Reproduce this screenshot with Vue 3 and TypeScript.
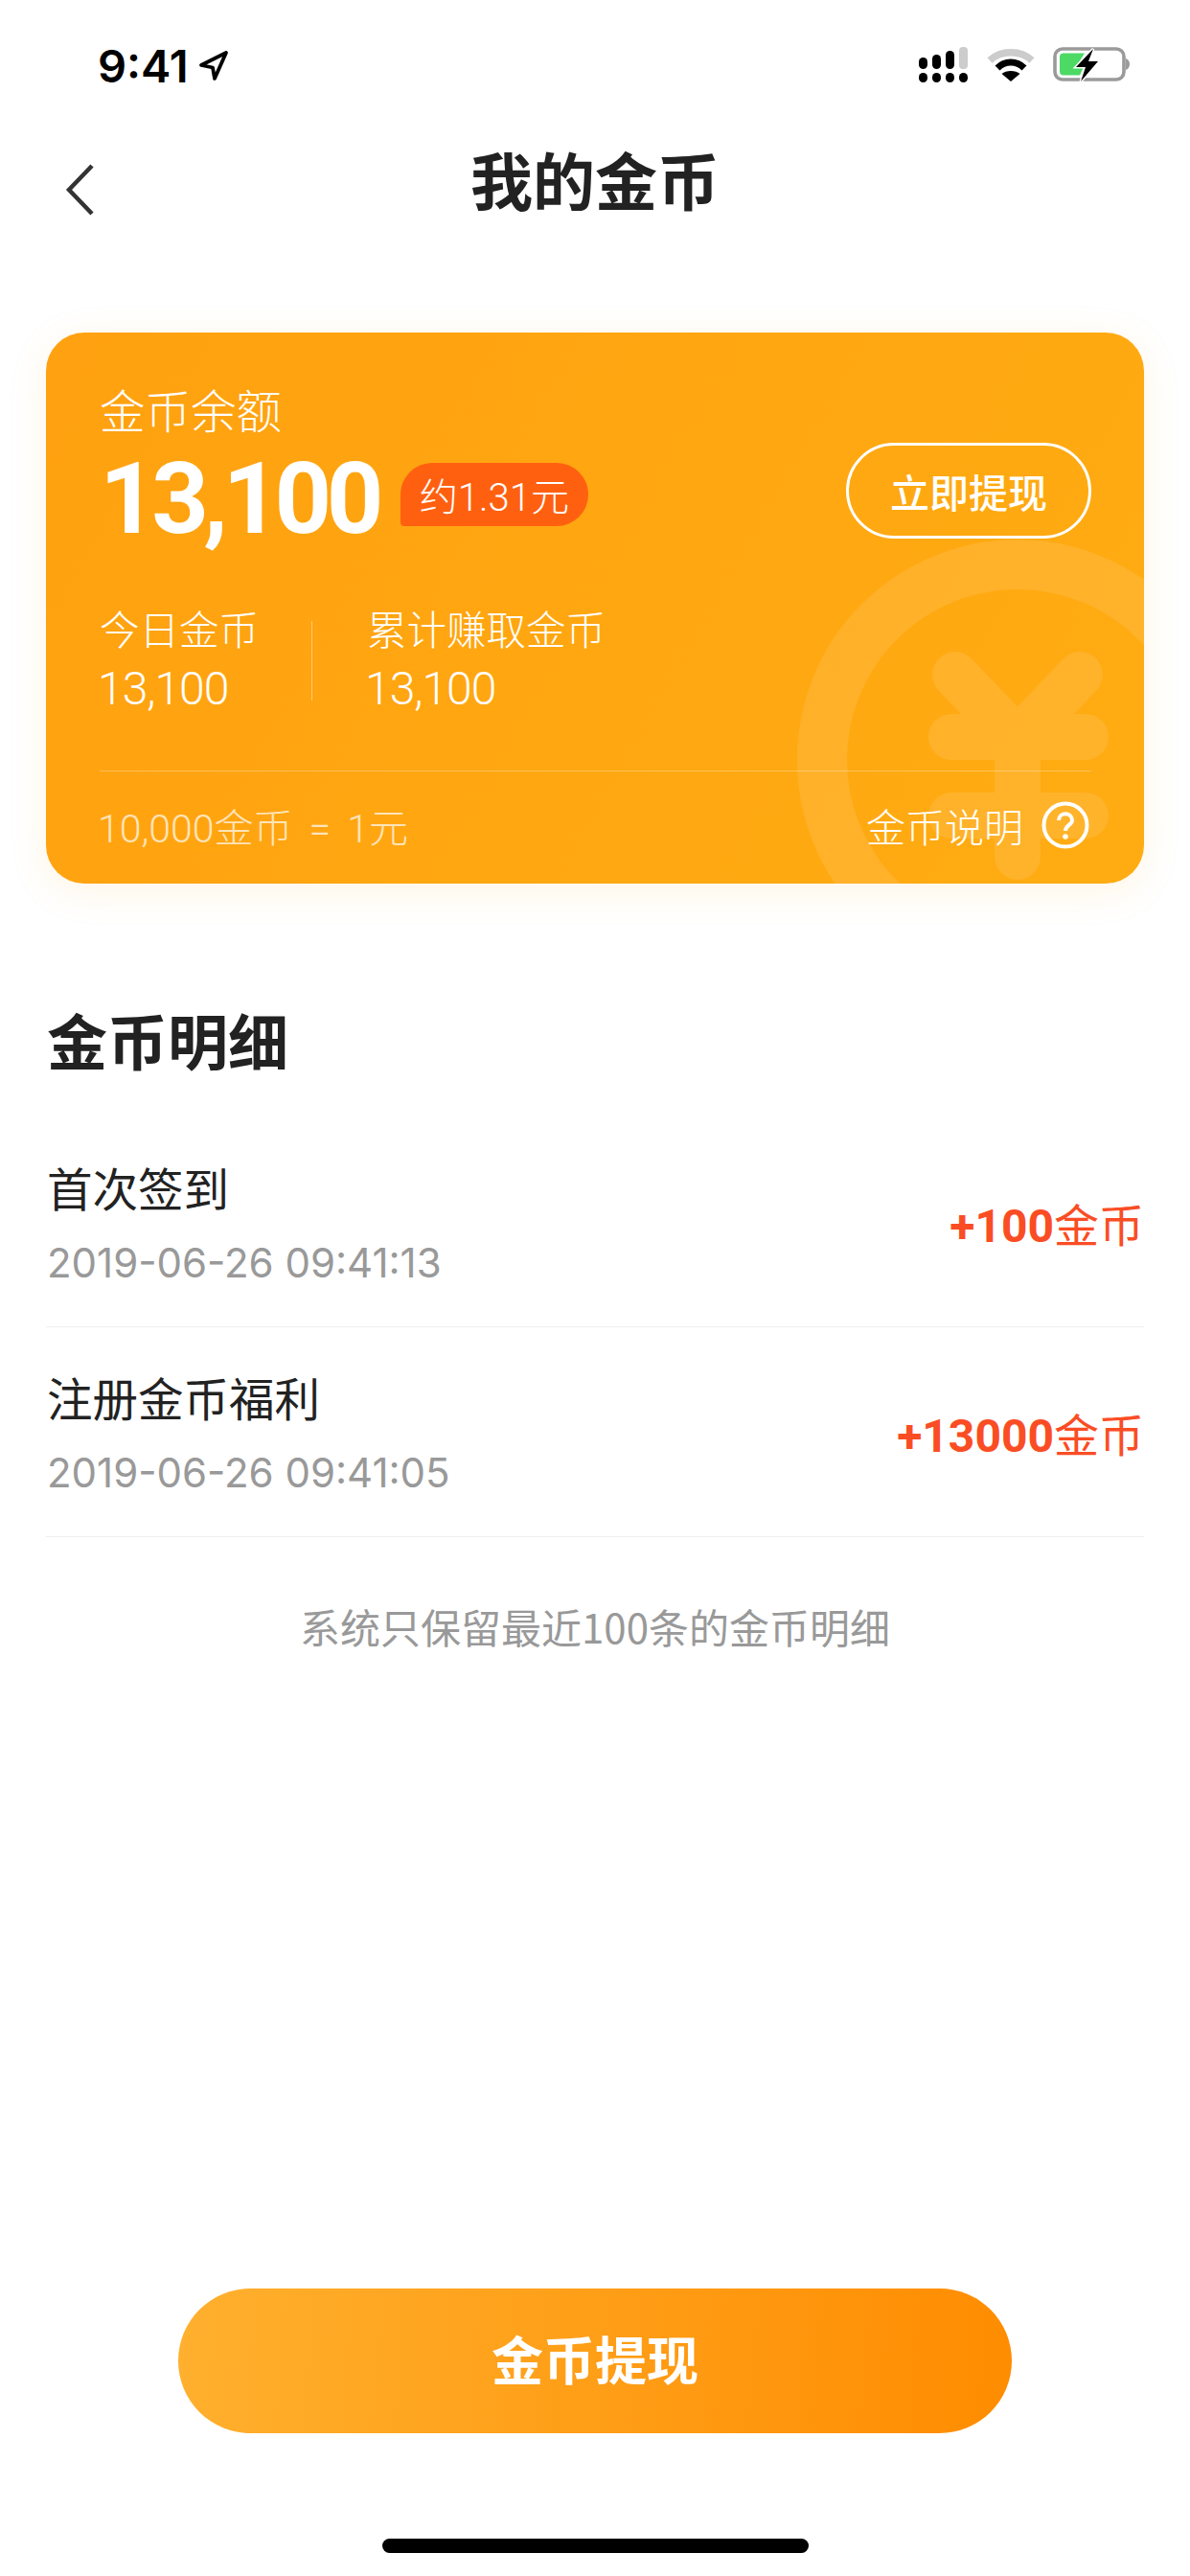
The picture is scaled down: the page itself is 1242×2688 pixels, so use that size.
<template>
  <div class="page">
    <div class="status-bar">
      <div class="time">
        <span>9:41</span>
        <svg class="loc" width="32" height="33" viewBox="0 0 32 33">
          <path d="M29 3 L3 16 L15 18.500 L17 30 Z" fill="none" stroke="#000" stroke-width="3.800" stroke-linejoin="round" />
        </svg>
      </div>
      <div class="status-icons">
        <svg width="52" height="38" viewBox="0 0 52 38">
          <g fill="#000">
            <rect x="0" y="11" width="9" height="12" rx="4.500" />
            <rect x="14" y="8" width="9" height="15" rx="4.500" />
            <rect x="28" y="4" width="9" height="19" rx="4.500" />
            <rect x="0" y="27" width="9" height="10" rx="4.500" />
            <rect x="14" y="27" width="9" height="10" rx="4.500" />
            <rect x="28" y="27" width="9" height="10" rx="4.500" />
            <rect x="42" y="27" width="9" height="10" rx="4.500" />
          </g>
          <rect x="42" y="0" width="9" height="23" rx="4" fill="#ccc" />
        </svg>
        <svg width="50" height="37" viewBox="0 0 50 37">
          <path d="M3 14 C15 3 35 3 47 14" fill="none" stroke="#ccc" stroke-width="7.500" />
          <path d="M11 22 C19 14 31 14 39 22" fill="none" stroke="#000" stroke-width="7" />
          <path d="M25 36 L15.500 28 C20 24 30 24 34.500 28 Z" fill="#000" />
        </svg>
        <svg width="81" height="37" viewBox="0 0 81 37">
          <rect x="2" y="2" width="72" height="32" rx="8" fill="none" stroke="#9a9a9a" stroke-width="3.600" />
          <path d="M76 12 C79 13 80 15.500 80 18 C80 20.500 79 23 76 24 Z" fill="#9a9a9a" />
          <path d="M11 6.500 H33 L24 21 H32 L28 29.500 H11 C8.500 29.500 7 28 7 25.500 V10.500 C7 8 8.500 6.500 11 6.500 Z" fill="#4cd964" />
          <path d="M42 2 L24 21 H34 L29 36 L47 15 H37 Z" fill="#000" stroke="#fff" stroke-width="3" paint-order="stroke" />
        </svg>
      </div>
    </div>

    <div class="nav-bar">
      <svg class="back" width="32" height="56" viewBox="0 0 32 56">
        <path d="M28 3 L4 28 L28 53" fill="none" stroke="#333" stroke-width="4.500" />
      </svg>
      <h1 class="nav-title">我的金币</h1>
    </div>

    <div class="card">
      <svg class="watermark" width="1146" height="575" viewBox="0 0 1146 575">
        <circle cx="1014" cy="446" r="204" fill="none" stroke="#fff" stroke-opacity="0.1" stroke-width="52" />
        <path
          d="M949 357 L1014 425 L1079 357 M945 422 H1085 M945 504 H1085 M1014 425 V547"
          fill="none"
          stroke="#fff"
          stroke-opacity="0.1"
          stroke-width="48"
          stroke-linecap="round"
          stroke-linejoin="round"
        />
      </svg>

      <div class="card-top">
        <div>
          <div class="balance-label">金币余额</div>
          <div class="balance-row">
            <span class="balance">13,100</span>
            <span class="badge">约1.31元</span>
          </div>
        </div>
        <button class="withdraw-small">立即提现</button>
      </div>

      <div class="stats">
        <div class="stat">
          <div class="stat-label">今日金币</div>
          <div class="stat-value">13,100</div>
        </div>
        <div class="stat-divider"></div>
        <div class="stat">
          <div class="stat-label">累计赚取金币</div>
          <div class="stat-value">13,100</div>
        </div>
      </div>

      <div class="card-foot">
        <span class="rate">10,000金币 = 1元</span>
        <span class="explain">
          金币说明
          <svg width="50" height="50" viewBox="0 0 50 50">
            <circle cx="25" cy="25" r="22.500" fill="none" stroke="#fff" stroke-width="4" />
            <path d="M18 20 C18 11 32 11 32 20 C32 25 25 25 25 31" fill="none" stroke="#fff" stroke-width="4" />
            <circle cx="25" cy="37" r="2.800" fill="#fff" />
          </svg>
        </span>
      </div>
    </div>

    <h2 class="section-title">金币明细</h2>

    <div class="list">
      <div v-for="item in records" :key="item.time" class="record">
        <div>
          <div class="record-name">{{ item.name }}</div>
          <div class="record-time">{{ item.time }}</div>
        </div>
        <div class="record-amount"><b>{{ item.amount }}</b>金币</div>
      </div>
    </div>

    <p class="note">系统只保留最近100条的金币明细</p>

    <div class="spacer"></div>

    <button class="withdraw">金币提现</button>
    <div class="home-wrap"><div class="home-bar"></div></div>
  </div>
</template>

<script setup lang="ts">
interface CoinRecord {
  name: string
  time: string
  amount: string
}

const records: CoinRecord[] = [
  { name: '首次签到', time: '2019-06-26 09:41:13', amount: '+100' },
  { name: '注册金币福利', time: '2019-06-26 09:41:05', amount: '+13000' }
]
</script>

<style>
html,
body {
  margin: 0;
  background: #fff;
}
</style>

<style scoped>
.page {
  width: 1242px;
  height: 2688px;
  display: flex;
  flex-direction: column;
  background: #fff;
  color: #222;
  font-family: "Noto Sans CJK SC", Roboto, sans-serif;
  overflow: hidden;
}

.status-bar {
  height: 132px;
  box-sizing: border-box;
  padding: 49px 62px 0 102px;
  display: flex;
  justify-content: space-between;
  align-items: flex-start;
}

.time {
  display: flex;
  align-items: center;
  gap: 10px;
  height: 42px;
  margin-top: -2px;
  font-family: Inter, sans-serif;
  font-size: 47px;
  font-weight: 600;
  color: #000;
}

.status-icons {
  display: flex;
  align-items: flex-start;
  gap: 19px;
}

.nav-bar {
  position: relative;
  height: 132px;
  display: flex;
  justify-content: center;
  align-items: flex-start;
}

.back {
  position: absolute;
  left: 68px;
  top: 38px;
}

.nav-title {
  margin: 16px 0 0;
  font-size: 65px;
  line-height: 76px;
  font-weight: 700;
  color: #222;
}

.card {
  position: relative;
  margin: 83px 48px 0;
  height: 575px;
  box-sizing: border-box;
  padding: 52px 55px 0 56px;
  border-radius: 40px;
  overflow: hidden;
  color: #fff;
  background: linear-gradient(120deg, #ffa110 0%, #ffac12 100%);
  box-shadow: 0 8px 40px rgba(255, 170, 30, 0.12);
  display: flex;
  flex-direction: column;
}

.watermark {
  position: absolute;
  left: 0;
  top: 0;
}

.card-top {
  position: relative;
  display: flex;
  justify-content: space-between;
  align-items: flex-end;
}

.balance-label {
  font-size: 47.500px;
  line-height: 56px;
  font-weight: 300;
}

.balance-row {
  display: flex;
  align-items: flex-start;
  margin-top: 24px;
}

.balance {
  font-family: Roboto, sans-serif;
  font-size: 104px;
  line-height: 84px;
  font-weight: 700;
  letter-spacing: -5.500px;
}

.badge {
  margin: 4px 0 0 23px;
  width: 196px;
  height: 66px;
  display: flex;
  justify-content: center;
  align-items: center;
  font-family: Roboto, "Noto Sans CJK SC", sans-serif;
  font-size: 40px;
  font-weight: 300;
  background: #ff6010;
  border-radius: 33px 33px 33px 4px;
}

.withdraw-small {
  width: 256px;
  height: 100px;
  margin-bottom: 1px;
  box-sizing: border-box;
  border: 3px solid #fff;
  border-radius: 50px;
  background: transparent;
  color: #fff;
  font-family: inherit;
  font-size: 41px;
  font-weight: 500;
  padding: 0;
}

.stats {
  position: relative;
  display: flex;
  align-items: center;
  margin-top: 68px;
}

.stat-label {
  font-size: 41.500px;
  line-height: 48px;
  font-weight: 300;
}

.stat-value {
  margin: 12px 0 0 -2px;
  font-family: Roboto, sans-serif;
  font-size: 48px;
  line-height: 56px;
  font-weight: 300;
  letter-spacing: -1px;
}

.stat:first-child {
  width: 221px;
}

.stat-divider {
  width: 1px;
  height: 83px;
  margin-right: 57px;
  background: rgba(255, 255, 255, 0.4);
}

.card-foot {
  position: relative;
  margin-top: 57px;
  padding-top: 26px;
  border-top: 1px solid rgba(255, 255, 255, 0.3);
  display: flex;
  justify-content: space-between;
  align-items: center;
  font-size: 41px;
  font-weight: 300;
}

.rate {
  opacity: 0.7;
  margin-left: -2px;
  font-family: Roboto, "Noto Sans CJK SC", sans-serif;
  font-size: 41px;
  word-spacing: 7px;
}

.explain {
  display: flex;
  align-items: center;
  gap: 19px;
  margin-right: 2px;
}

.section-title {
  margin: 117px 49px 0;
  font-size: 63px;
  line-height: 90px;
  font-weight: 700;
  color: #222;
}

.list {
  margin: 37px 48px 0;
}

.record {
  height: 219px;
  box-sizing: border-box;
  padding: 0 0 0 1px;
  display: flex;
  justify-content: space-between;
  align-items: center;
  border-bottom: 1px solid #eee;
}

.record-name {
  font-size: 47.500px;
  line-height: 64px;
  color: #222;
}

.record-time {
  margin-top: 22px;
  font-family: Inter, sans-serif;
  font-size: 42px;
  line-height: 50px;
  color: #999;
}

.record-amount {
  font-size: 47px;
  color: #fa4d24;
  font-weight: 400;
}

.record-amount b {
  font-family: Roboto, sans-serif;
  font-size: 48px;
  font-weight: 700;
}

.note {
  margin: 68px 0 0;
  text-align: center;
  font-size: 42px;
  line-height: 50px;
  color: #999;
}

.spacer {
  flex: 1;
}

.withdraw {
  align-self: center;
  width: 870px;
  height: 151px;
  border: 0;
  padding: 0 0 6px;
  border-radius: 76px;
  background: linear-gradient(95deg, #ffb02e 0%, #ff8c00 100%);
  color: #fff;
  font-family: inherit;
  font-size: 54px;
  font-weight: 700;
}

.home-wrap {
  height: 149px;
  display: flex;
  justify-content: center;
  padding-top: 110px;
  box-sizing: border-box;
}

.home-bar {
  width: 445px;
  height: 15px;
  border-radius: 8px;
  background: #000;
}
</style>
